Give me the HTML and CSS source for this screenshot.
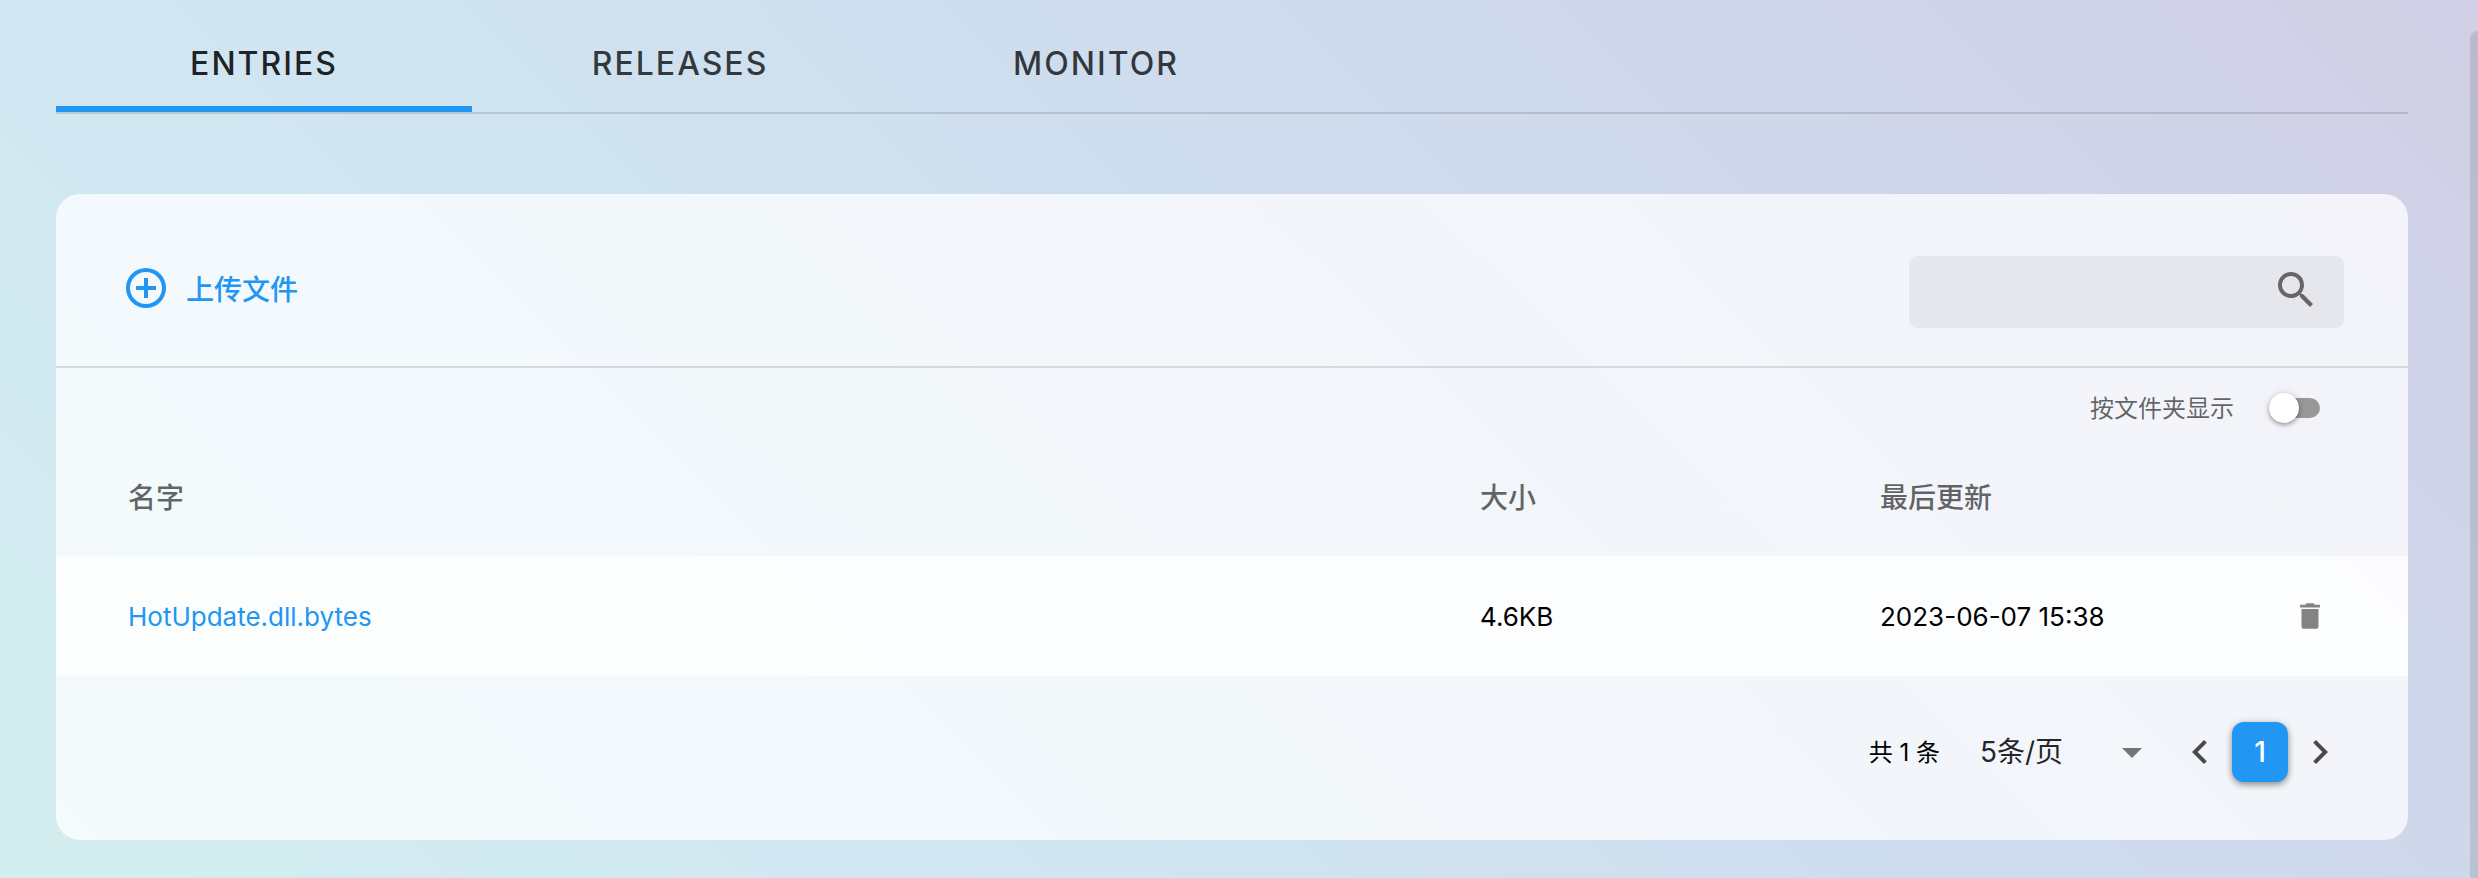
FILE: index.html
```html
<!DOCTYPE html>
<html lang="zh-CN">
<head>
  <meta charset="utf-8">
  <title>Entries</title>
  <link rel="stylesheet" href="styles.css">
</head>
<body>
  <div class="tabs" role="tablist">
    <button class="tab active" role="tab" aria-selected="true">ENTRIES</button>
    <button class="tab" role="tab">RELEASES</button>
    <button class="tab" role="tab">MONITOR</button>
  </div>

  <main class="card">
    <div class="toolbar">
      <button class="upload">
        <svg class="icon" viewBox="0 0 24 24"><path d="M12,20C7.59,20 4,16.41 4,12C4,7.59 7.59,4 12,4C16.41,4 20,7.59 20,12C20,16.41 16.41,20 12,20M12,2A10,10 0 0,0 2,12A10,10 0 0,0 12,22A10,10 0 0,0 22,12A10,10 0 0,0 12,2M13,7H11V11H7V13H11V17H13V13H17V11H13V7Z"/></svg>
        上传文件
      </button>
      <div class="search">
        <input type="text" aria-label="搜索">
        <svg class="icon" viewBox="0 0 24 24"><path d="M9.5,3A6.5,6.5 0 0,1 16,9.5C16,11.11 15.41,12.59 14.44,13.73L14.71,14H15.5L20.5,19L19,20.5L14,15.5V14.71L13.73,14.44C12.59,15.41 11.11,16 9.5,16A6.5,6.5 0 0,1 3,9.5A6.5,6.5 0 0,1 9.5,3M9.5,5C7,5 5,7 5,9.5C5,12 7,14 9.5,14C12,14 14,12 14,9.5C14,7 12,5 9.5,5Z"/></svg>
      </div>
    </div>

    <div class="options">
      <label for="by_folder">按文件夹显示</label>
      <input id="by_folder" class="switch" type="checkbox" role="switch">
    </div>

    <table class="entries">
      <thead>
        <tr>
          <th class="name">名字</th>
          <th class="size">大小</th>
          <th class="updated">最后更新</th>
          <th class="actions"></th>
        </tr>
      </thead>
      <tbody>
        <tr>
          <td class="name"><a href="#">HotUpdate.dll.bytes</a></td>
          <td>4.6KB</td>
          <td>2023-06-07 15:38</td>
          <td>
            <button class="delete" aria-label="删除">
              <svg viewBox="0 0 24 24"><path d="M19,4H15.5L14.5,3H9.5L8.5,4H5V6H19M6,19A2,2 0 0,0 8,21H16A2,2 0 0,0 18,19V7H6V19Z"/></svg>
            </button>
          </td>
        </tr>
      </tbody>
    </table>

    <div class="footer">
      <span class="total">共 1 条</span>
      <div class="per-page">
        <select aria-label="每页条数">
          <option>5条/页</option>
        </select>
        <svg class="icon" viewBox="0 0 24 24"><path d="M7,10L12,15L17,10H7Z"/></svg>
      </div>
      <nav class="pages">
        <button class="arrow" aria-label="上一页">
          <svg class="icon" viewBox="0 0 24 24"><path d="M15.41,16.58L10.83,12L15.41,7.41L14,6L8,12L14,18L15.41,16.58Z"/></svg>
        </button>
        <button class="page">1</button>
        <button class="arrow" aria-label="下一页">
          <svg class="icon" viewBox="0 0 24 24"><path d="M8.59,16.58L13.17,12L8.59,7.41L10,6L16,12L10,18L8.59,16.58Z"/></svg>
        </button>
      </nav>
    </div>
  </main>

  <div class="scroll-thumb"></div>
</body>
</html>
```

FILE: styles.css
```css
* {
  box-sizing: border-box;
}

body {
  margin: 0;
  min-height: 100vh;
  padding: 0 70px 38px 56px;
  background: linear-gradient(45deg, #d4eeef, #d1e8f2 24%, #cedcee 60%, #d1cfe5);
  color: #000;
  font-family: Inter, "Noto Sans CJK SC", sans-serif;
  font-size: 26px;
}

button, input, select {
  border: 0;
  padding: 0;
  background: none;
  color: inherit;
  font: inherit;
}

button, select {
  cursor: pointer;
}

svg {
  display: block;
  fill: currentColor;
}

.icon {
  width: 48px;
  height: 48px;
  flex: none;
}

/* tabs */
.tabs {
  display: flex;
  height: 114px;
  border-bottom: 2px solid rgba(0, 0, 0, 0.12);
}

.tab {
  width: 416px;
  padding-top: 20px;
  border-bottom: 6px solid transparent;
  color: rgba(0, 0, 0, 0.75);
  font-size: 32px;
  font-weight: 500;
  letter-spacing: 2px;
}

.tab.active {
  border-color: #2196f3;
  color: rgba(0, 0, 0, 0.87);
}

/* card */
.card {
  margin-top: 80px;
  border-radius: 24px;
  background: rgba(255, 255, 255, 0.74);
  overflow: hidden;
}

.toolbar {
  display: flex;
  justify-content: space-between;
  align-items: flex-start;
  padding: 62px 64px 38px 66px;
  border-bottom: 2px solid rgba(0, 0, 0, 0.12);
}

.upload {
  display: flex;
  align-items: center;
  gap: 16px;
  height: 64px;
  color: #2196f3;
  font-size: 28px;
  font-weight: 500;
}

.search {
  display: flex;
  align-items: center;
  width: 435px;
  height: 72px;
  padding: 0 24px 4px;
  border-radius: 8px;
  background: rgba(0, 0, 0, 0.05);
  color: #666;
}

.search input {
  flex: 1;
  min-width: 0;
  outline: none;
}

.options {
  display: flex;
  justify-content: flex-end;
  align-items: center;
  gap: 38px;
  height: 68px;
  padding: 12px 88px 0 0;
  color: rgba(0, 0, 0, 0.6);
  font-size: 24px;
}

.options label {
  padding-bottom: 4px;
}

.switch {
  appearance: none;
  position: relative;
  width: 48px;
  height: 20px;
  margin: 0;
  border-radius: 10px;
  background: #989898;
}

.switch::before {
  content: "";
  position: absolute;
  top: -5px;
  left: -3px;
  width: 30px;
  height: 30px;
  border-radius: 50%;
  background: #fff;
  box-shadow: 0 2px 4px rgba(0, 0, 0, 0.35), 0 0 8px rgba(0, 0, 0, 0.1);
}

/* table */
.entries {
  width: 100%;
  table-layout: fixed;
  border-collapse: collapse;
}

.entries th, .entries td {
  height: 120px;
  padding: 0;
  text-align: left;
}

.entries th {
  color: rgba(0, 0, 0, 0.6);
  font-size: 28px;
  font-weight: 500;
}

.entries .name {
  padding-left: 72px;
}

.size, .updated {
  width: 400px;
}

.actions {
  width: 128px;
}

.entries tbody tr {
  background: rgba(255, 255, 255, 0.75);
}

.entries a {
  color: #2196f3;
  text-decoration: none;
}

.delete {
  display: flex;
  justify-content: center;
  width: 60px;
  color: #838383;
}

.delete svg {
  width: 34px;
  height: 34px;
}

/* footer */
.footer {
  display: flex;
  justify-content: flex-end;
  align-items: center;
  height: 164px;
  padding: 0 64px 12px 0;
}

.total {
  margin-right: 40px;
  padding-bottom: 4px;
  font-size: 24px;
}

.per-page {
  position: relative;
  margin-right: 24px;
  color: rgba(0, 0, 0, 0.87);
  font-size: 28px;
}

.per-page select {
  appearance: none;
  width: 172px;
  height: 48px;
}

.per-page .icon {
  position: absolute;
  top: 0;
  right: -4px;
  color: #757575;
  pointer-events: none;
}

.pages {
  display: flex;
  align-items: center;
  gap: 8px;
}

.arrow {
  color: #4a4a4a;
}

.page {
  width: 56px;
  height: 60px;
  border-radius: 12px;
  background: #2196f3;
  box-shadow: 0 3px 6px rgba(0, 0, 0, 0.35), 0 0 10px rgba(0, 0, 0, 0.12);
  color: #fff;
  font-size: 28px;
  font-weight: 500;
}

.scroll-thumb {
  position: fixed;
  top: 31px;
  right: 0;
  bottom: 0;
  width: 8px;
  border-radius: 8px 0 0 0;
  background: rgba(0, 0, 0, 0.1);
}
```
